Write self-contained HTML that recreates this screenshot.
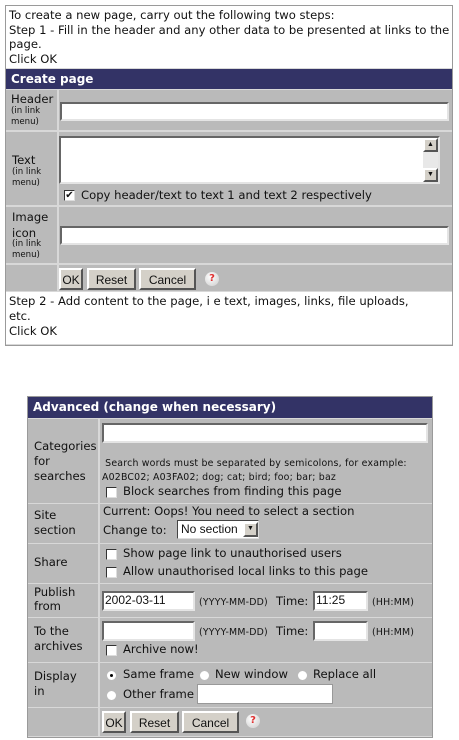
<!DOCTYPE html>
<html><head><meta charset="utf-8"><style>
*{box-sizing:border-box;margin:0;padding:0}
body{width:459px;height:740px;background:#fff;position:relative;font-family:"DejaVu Sans","Liberation Sans",sans-serif;font-size:11.6px;color:#111;overflow:hidden}
.a{position:absolute;white-space:nowrap}
.box{border:1px solid #9a9a9a;background:#d8d8d8}
.w{background:#fff;white-space:normal}
.c{background:#bababa}
.hd{background:#333366;color:#fff;font-weight:bold;font-size:12px;padding:3px 0 0 5px}
.in{background:#fff;border:2px solid;border-color:#666 #e4e4e4 #e4e4e4 #666}
.sm{font-size:8.6px;line-height:11px}
.tiny{font-size:9.4px;letter-spacing:0.2px}
.cb{width:11px;height:11px;background:#fff;border:1px solid #333;border-right-color:#ddd;border-bottom-color:#ddd}
.btn{background:#d4d0c8;border:2px solid;border-color:#fff #555 #555 #fff;font-family:"Liberation Sans",sans-serif;font-size:12px;text-align:center;line-height:21px}
.help{width:14px;height:14px;border-radius:50%;background:radial-gradient(circle at 40% 35%,#fff,#ccc);color:#e03030;font-weight:bold;font-size:10px;text-align:center;line-height:14px}
.rd{width:11px;height:11px;border-radius:50%;background:#fff;border:1px solid #bbb}
</style></head><body>

<div class="a box" style="left:5px;top:5px;width:448px;height:341px"></div>
<div class="a w" style="left:6px;top:6px;width:446px;height:62px;padding:2px 0 0 3px;line-height:14.5px">To create a new page, carry out the following two steps:<br>Step 1 - Fill in the header and any other data to be presented at links to the page.<br>Click OK</div>
<div class="a hd" style="left:6px;top:69px;width:446px;height:20px">Create page</div>

<div class="a c" style="left:6px;top:90px;width:51px;height:40px;padding:2px 0 0 5px;line-height:14px">Header<div class="sm">(in link<br>menu)</div></div>
<div class="a c" style="left:59px;top:90px;width:393px;height:40px"></div>
<div class="a in" style="left:60px;top:102px;width:389px;height:19px"></div>

<div class="a c" style="left:6px;top:132px;width:51px;height:73px;padding:21px 0 0 6px;line-height:14px">Text<div class="sm">(in link<br>menu)</div></div>
<div class="a c" style="left:59px;top:132px;width:393px;height:73px"></div>
<div class="a in" style="left:59px;top:136px;width:381px;height:48px"></div>
<div class="a" style="left:423px;top:138px;width:15px;height:44px;background:#e8e8e8"></div>
<div class="a btn" style="left:423px;top:138px;width:15px;height:14px;font-size:7px;line-height:10px">▲</div>
<div class="a btn" style="left:423px;top:168px;width:15px;height:14px;font-size:7px;line-height:10px">▼</div>
<div class="a cb" style="left:64px;top:190px;font-size:10px;line-height:9px;text-align:center">✔</div>
<div class="a" style="left:81px;top:188px">Copy header/text to text 1 and text 2 respectively</div>

<div class="a c" style="left:6px;top:207px;width:51px;height:56px;padding:2px 0 0 6px;line-height:16px">Image<br>icon<div class="sm" style="margin-top:-2px">(in link<br>menu)</div></div>
<div class="a c" style="left:59px;top:207px;width:393px;height:56px"></div>
<div class="a in" style="left:60px;top:226px;width:389px;height:19px"></div>

<div class="a c" style="left:6px;top:265px;width:51px;height:26px"></div>
<div class="a c" style="left:59px;top:265px;width:393px;height:26px"></div>
<div class="a btn" style="left:59px;top:268px;width:24px;height:22px">OK</div>
<div class="a btn" style="left:87px;top:268px;width:49px;height:22px">Reset</div>
<div class="a btn" style="left:139px;top:268px;width:57px;height:22px">Cancel</div>
<div class="a help" style="left:205px;top:272px">?</div>

<div class="a w" style="left:6px;top:292px;width:446px;height:52px;padding:2px 0 0 3px;line-height:15px">Step 2 - Add content to the page, i e text, images, links, file uploads,<br>etc.<br>Click OK</div>

<!-- bottom -->
<div class="a box" style="left:27px;top:396px;width:406px;height:342px"></div>
<div class="a hd" style="left:28px;top:397px;width:404px;height:21px">Advanced (change when necessary)</div>

<div class="a c" style="left:28px;top:419px;width:70px;height:84px;padding:20px 0 0 6px;line-height:15px">Categories<br>for<br>searches</div>
<div class="a c" style="left:100px;top:419px;width:332px;height:84px"></div>
<div class="a in" style="left:102px;top:423px;width:326px;height:20px"></div>
<div class="a tiny" style="left:102px;top:457px;line-height:14px">&nbsp;Search words must be separated by semicolons, for example:<br>A02BC02; A03FA02; dog; cat; bird; foo; bar; baz</div>
<div class="a cb" style="left:106px;top:487px"></div>
<div class="a" style="left:123px;top:484px">Block searches from finding this page</div>

<div class="a c" style="left:28px;top:504px;width:70px;height:39px;padding:4px 0 0 6px;line-height:15px">Site<br>section</div>
<div class="a c" style="left:100px;top:504px;width:332px;height:39px"></div>
<div class="a" style="left:103px;top:504px">Current: Oops! You need to select a section</div>
<div class="a" style="left:103px;top:523px">Change to:</div>
<div class="a" style="left:177px;top:520px;width:82px;height:19px;background:#fff;border:1px solid #444;border-right-color:#ddd;border-bottom-color:#ddd;font-family:'Liberation Sans',sans-serif;font-size:12px;padding-left:3px;line-height:16px">No section</div>
<div class="a btn" style="left:243px;top:522px;width:15px;height:15px;font-size:7px;line-height:10px">▼</div>

<div class="a c" style="left:28px;top:544px;width:70px;height:39px;padding:11px 0 0 6px">Share</div>
<div class="a c" style="left:100px;top:544px;width:332px;height:39px"></div>
<div class="a cb" style="left:106px;top:549px"></div>
<div class="a" style="left:123px;top:546px">Show page link to unauthorised users</div>
<div class="a cb" style="left:106px;top:567px"></div>
<div class="a" style="left:123px;top:564px">Allow unauthorised local links to this page</div>

<div class="a c" style="left:28px;top:584px;width:70px;height:33px;padding:1px 0 0 6px;line-height:14px">Publish<br>from</div>
<div class="a c" style="left:100px;top:584px;width:332px;height:33px"></div>
<div class="a in" style="left:102px;top:591px;width:93px;height:20px;font-family:'Liberation Sans',sans-serif;font-size:12px;line-height:15px;padding-left:1px">2002-03-11</div>
<div class="a tiny" style="left:199px;top:597px">(YYYY-MM-DD)</div>
<div class="a" style="left:276px;top:594px">Time:</div>
<div class="a in" style="left:313px;top:591px;width:55px;height:20px;font-family:'Liberation Sans',sans-serif;font-size:12px;line-height:15px;padding-left:1px">11:25</div>
<div class="a tiny" style="left:372px;top:597px">(HH:MM)</div>

<div class="a c" style="left:28px;top:618px;width:70px;height:44px;padding:6px 0 0 6px;line-height:15px">To the<br>archives</div>
<div class="a c" style="left:100px;top:618px;width:332px;height:44px"></div>
<div class="a in" style="left:102px;top:621px;width:93px;height:20px"></div>
<div class="a tiny" style="left:199px;top:627px">(YYYY-MM-DD)</div>
<div class="a" style="left:276px;top:624px">Time:</div>
<div class="a in" style="left:313px;top:621px;width:55px;height:20px"></div>
<div class="a tiny" style="left:372px;top:627px">(HH:MM)</div>
<div class="a cb" style="left:106px;top:645px"></div>
<div class="a" style="left:123px;top:642px">Archive now!</div>

<div class="a c" style="left:28px;top:663px;width:70px;height:44px;padding:6px 0 0 6px;line-height:15px">Display<br>in</div>
<div class="a c" style="left:100px;top:663px;width:332px;height:44px"></div>
<div class="a rd" style="left:106px;top:670px"><div style="width:3px;height:3px;background:#000;border-radius:50%;margin:3px"></div></div>
<div class="a" style="left:123px;top:667px">Same frame</div>
<div class="a rd" style="left:199px;top:670px"></div>
<div class="a" style="left:215px;top:667px">New window</div>
<div class="a rd" style="left:297px;top:670px"></div>
<div class="a" style="left:313px;top:667px">Replace all</div>
<div class="a rd" style="left:106px;top:690px"></div>
<div class="a" style="left:123px;top:687px">Other frame</div>
<div class="a" style="left:197px;top:684px;width:136px;height:20px;background:#fff;border:1px solid #999"></div>

<div class="a c" style="left:28px;top:708px;width:70px;height:28px"></div>
<div class="a c" style="left:100px;top:708px;width:332px;height:28px"></div>
<div class="a btn" style="left:102px;top:711px;width:24px;height:22px">OK</div>
<div class="a btn" style="left:130px;top:711px;width:49px;height:22px">Reset</div>
<div class="a btn" style="left:182px;top:711px;width:57px;height:22px">Cancel</div>
<div class="a help" style="left:246px;top:714px">?</div>
</body></html>
